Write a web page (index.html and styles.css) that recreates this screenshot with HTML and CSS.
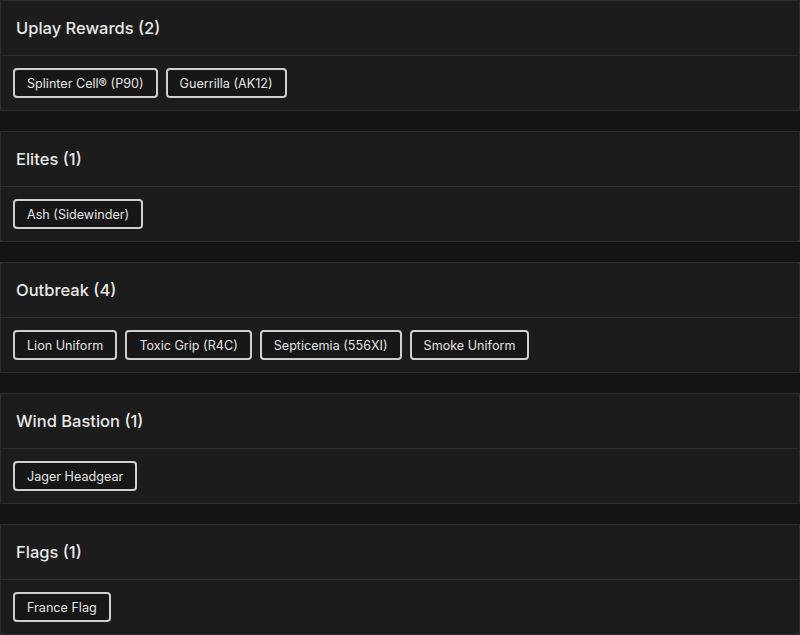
FILE: index.html
```html
<!DOCTYPE html>
<html>
<head>
	<title>Collections</title>
	<link rel="stylesheet" href="styles.css">
</head>
<body>
	<div class="list">
		<div class="card">
			<div class="card-head">Uplay Rewards (2)</div>
			<div class="card-body">
				<span class="chip">Splinter Cell® (P90)</span>
				<span class="chip">Guerrilla (AK12)</span>
			</div>
		</div>
		<div class="card">
			<div class="card-head">Elites (1)</div>
			<div class="card-body">
				<span class="chip">Ash (Sidewinder)</span>
			</div>
		</div>
		<div class="card">
			<div class="card-head">Outbreak (4)</div>
			<div class="card-body">
				<span class="chip">Lion Uniform</span>
				<span class="chip">Toxic Grip (R4C)</span>
				<span class="chip">Septicemia (556XI)</span>
				<span class="chip">Smoke Uniform</span>
			</div>
		</div>
		<div class="card">
			<div class="card-head">Wind Bastion (1)</div>
			<div class="card-body">
				<span class="chip">Jager Headgear</span>
			</div>
		</div>
		<div class="card">
			<div class="card-head">Flags (1)</div>
			<div class="card-body">
				<span class="chip">France Flag</span>
			</div>
		</div>
	</div>
</body>
</html>
```

FILE: styles.css
```css
body {
	margin: 0;
	background: #141414;
	font-family: Inter, "Noto Sans", sans-serif;
	color: #e8e8e8;
}

.list {
	display: flex;
	flex-direction: column;
	gap: 20px;
}

.card {
	background: #1c1c1c;
	border: 1px solid #2d2d2d;
}

.card-head {
	height: 54px;
	display: flex;
	align-items: center;
	padding-left: 15px;
	font-size: 16.5px;
	font-weight: 500;
	border-bottom: 1px solid #2d2d2d;
}

.card-body {
	height: 54px;
	box-sizing: border-box;
	padding: 12px;
	display: flex;
	gap: 8px;
}

.chip {
	height: 30px;
	box-sizing: border-box;
	display: flex;
	align-items: center;
	padding: 0 12px;
	border: 2px solid #d0d0d0;
	border-radius: 4px;
	background: #171717;
	font-size: 12.6px;
	color: #e4e4e4;
}
```
